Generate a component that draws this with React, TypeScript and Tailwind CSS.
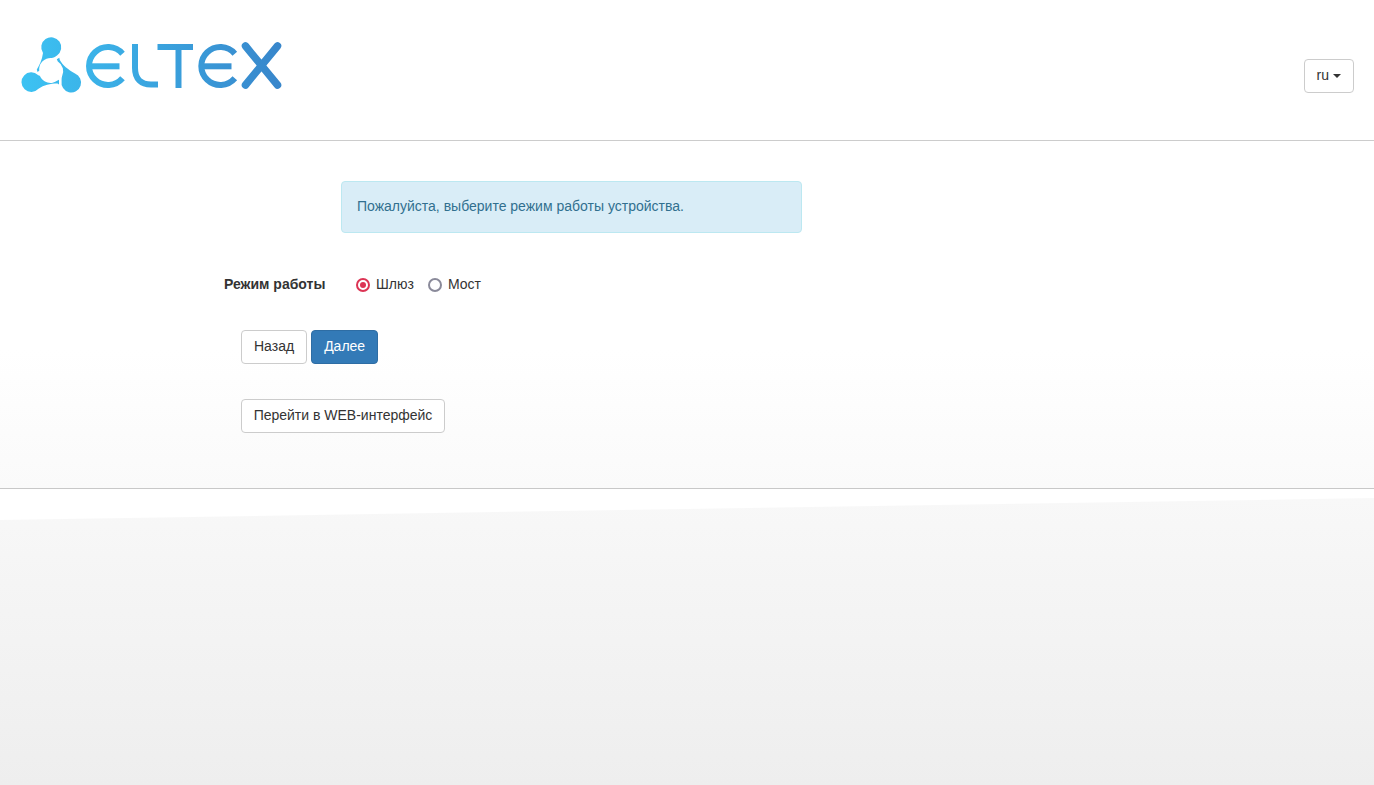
import React from 'react';

const Logo: React.FC = () => (
  <svg width="270" height="64" viewBox="16 32 270 64" fill="none">
    <defs>
      <linearGradient id="eltexGrad" gradientUnits="userSpaceOnUse" x1="20" y1="0" x2="282" y2="0">
        <stop offset="0" stopColor="#3cc3f3" />
        <stop offset="1" stopColor="#3886cb" />
      </linearGradient>
    </defs>
    <g fill="url(#eltexGrad)">
      <path d="M36.800 69.500C39.500 65 42 60 43 53A10 10 0 1 1 57 55.500C55 57 53.500 57.800 51.500 58A11.500 11.500 0 0 0 39.200 70.800L37.500 72Z" />
      <path d="M38 75C38.500 75.300 39 75.500 39.800 75.700A11.500 11.500 0 0 0 57.500 80.500L59 79.800V84.600L57.500 83.600C50 83.600 44 85 38.500 88.800A9.800 9.800 0 1 1 38 75Z" />
      <path d="M56.800 59.300L59.300 57.800L59.800 60C62.500 65 68 69.500 75 73.600A9.800 9.800 0 1 1 61.600 81C61.600 79 61.600 78 62 76.500A11.500 11.500 0 0 0 57.800 61.500Z" />
    </g>
    <g stroke="url(#eltexGrad)" strokeWidth="6">
      <path d="M122.500 53.700A19 19 0 1 0 122.500 78.300" />
      <path d="M92 66.300H119.500" />
      <path d="M135 44V68C135 79 141 84.500 151 84.500H158" />
      <path d="M157.500 47H193" />
      <path d="M178.500 47V88" />
      <path d="M234.800 53.700A19 19 0 1 0 234.800 78.300" />
      <path d="M204 66.300H231.500" />
      <path d="M245.500 46L277.500 85M277.500 46L245.500 85" strokeWidth="7.500" strokeLinecap="round" />
    </g>
  </svg>
);

const Radio: React.FC<{ label: string; checked?: boolean }> = ({ label, checked }) => (
  <label className="flex items-center gap-[6px]">
    {checked ? (
      <span className="mt-[2px] flex h-[14px] w-[14px] items-center justify-center rounded-full border-2 border-[#dc3454] bg-white">
        <span className="h-[6px] w-[6px] rounded-full bg-[#dc3454]" />
      </span>
    ) : (
      <span className="mt-[2px] h-[14px] w-[14px] rounded-full border-2 border-[#8a8a9a] bg-white" />
    )}
    <span>{label}</span>
  </label>
);

const btn = 'h-[34px] rounded border border-[#ccc] bg-white pb-[2px] text-sm text-[#333]';

export default function App() {
  return (
    <div className="flex h-[785px] flex-col overflow-hidden bg-white font-['Liberation_Sans',Arial,sans-serif] text-sm text-[#333]">
      <header className="flex h-[141px] items-start justify-between border-b border-[#ccc] pr-5">
        <div className="pl-[16px] pt-[32px]">
          <Logo />
        </div>
        <button className="mt-[59px] flex h-[34px] items-center gap-1 rounded border border-[#ccc] bg-white px-3 pb-[2px] text-sm">
          ru
          <span className="mt-[2px] h-0 w-0 border-x-4 border-t-4 border-x-transparent border-t-[#333]" />
        </button>
      </header>

      <main className="h-[348px] border-b border-[#c8c8c8] bg-gradient-to-b from-white from-[60%] to-[#fafafa] pt-10">
        <div className="ml-[341px] flex h-[52px] w-[461px] items-center rounded border border-[#bce8f1] bg-[#d9edf7] px-[15px] pb-[2px] text-[#31708f]">
          Пожалуйста, выберите режим работы устройства.
        </div>
        <div className="ml-[224px] mt-[41px] flex h-5 items-center">
          <span className="w-[132px] font-bold">Режим работы</span>
          <div className="flex items-center gap-[14px]">
            <Radio label="Шлюз" checked />
            <Radio label="Мост" />
          </div>
        </div>
        <div className="ml-[241px] mt-[36px] flex gap-1">
          <button className={`${btn} px-3`}>Назад</button>
          <button className="h-[34px] rounded border border-[#2e6da4] bg-[#337ab7] px-3 pb-[2px] text-sm text-white">Далее</button>
        </div>
        <div className="ml-[241px] mt-[35px]">
          <button className={`${btn} w-[204px]`}>Перейти в WEB-интерфейс</button>
        </div>
      </main>

      <footer className="flex-1 bg-white pt-[9px]">
        <div className="h-full bg-gradient-to-b from-[#f8f8f8] to-[#eeeeee] [clip-path:polygon(0_22px,100%_0,100%_100%,0_100%)]" />
      </footer>
    </div>
  );
}
